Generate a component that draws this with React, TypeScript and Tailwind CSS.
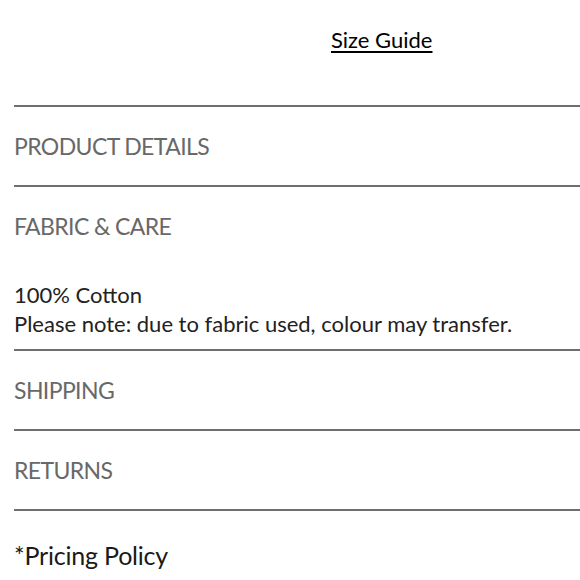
import React from "react";

const sections = ["PRODUCT DETAILS", "FABRIC & CARE", "SHIPPING", "RETURNS"];

function Header({ label }: { label: string }) {
  return (
    <div className="flex h-[78px] items-center text-[23px] text-[#686868] tracking-[-0.6px]">
      {label}
    </div>
  );
}

export default function App() {
  return (
    <div className="w-[580px] h-[580px] bg-white overflow-hidden font-['Lato',sans-serif]">
      <div className="h-[105px] pl-[331px] pt-[23px]">
        <a href="#" className="text-[22px] text-black underline underline-offset-[3px] decoration-[1.5px]">
          Size Guide
        </a>
      </div>

      <div className="pl-[14px]">
        <div className="border-t-2 border-[#6e6e6e]">
          <Header label={sections[0]} />
        </div>
        <div className="border-t-2 border-[#6e6e6e]">
          <Header label={sections[1]} />
          <div className="text-[22px] leading-[29px] text-[#222222] pt-[15px] pb-[11px]">
            <p>100% Cotton</p>
            <p>Please note: due to fabric used, colour may transfer.</p>
          </div>
        </div>
        <div className="border-t-2 border-[#6e6e6e]">
          <Header label={sections[2]} />
        </div>
        <div className="border-t-2 border-[#6e6e6e]">
          <Header label={sections[3]} />
        </div>
        <div className="border-t-2 border-[#6e6e6e]">
          <div className="pt-[26px] text-[25px] text-[#1a1a1a] tracking-[-0.2px]">*Pricing Policy</div>
        </div>
      </div>
    </div>
  );
}
